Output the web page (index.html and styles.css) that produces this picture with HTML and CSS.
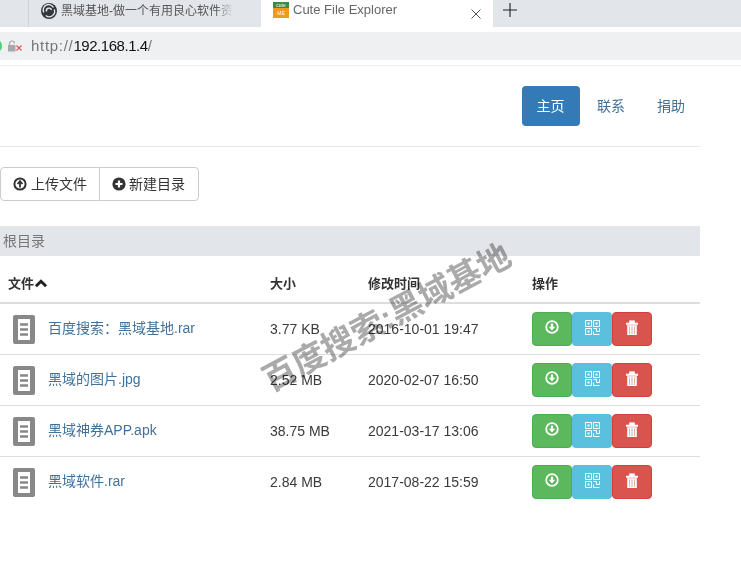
FILE: index.html
```html
<!DOCTYPE html>
<html lang="zh-CN">
<head>
<meta charset="utf-8">
<title>Cute File Explorer</title>
<link rel="stylesheet" href="styles.css">
</head>
<body>
<svg class="defs" aria-hidden="true">
  <symbol id="i-doc" viewBox="0 0 22 29"><rect width="22" height="29" rx="2" fill="#888"/><rect x="5" y="4" width="12" height="21" fill="#fff"/><path d="M7 9.500h8M7 14.500h8M7 19.500h8" stroke="#888" stroke-width="2.400"/></symbol>
  <symbol id="i-dl" viewBox="0 0 14 14"><circle cx="7" cy="7" r="5.800" fill="none" stroke="#fff" stroke-width="1.800"/><path d="M7 3.500V9" stroke="#fff" stroke-width="2.200"/><path d="M3.800 6.800h6.400L7 10.500z" fill="#fff"/></symbol>
  <symbol id="i-qr" viewBox="0 0 15 15"><path d="M.5.500h6v6h-6zM.5 8.500h6v6h-6zM8.500.500h6v6h-6zM8.500 8.500h3v3M14.500 8v3.500M11.500 11.500h3M8.500 14.500h6M8.500 11.500v3" fill="none" stroke="#fff" stroke-width="1"/><path d="M2.500 2.500h2v2h-2zM2.500 10.500h2v2h-2zM10.500 2.500h2v2h-2z" fill="#fff"/></symbol>
  <symbol id="i-del" viewBox="0 0 12 15"><path d="M0 3h12v1.500H0zM3.500 3V.7h5V3" fill="#fff" stroke="#fff" stroke-width=".6"/><path d="M1.200 5.200h9.600V15H1.200z" fill="#fff"/><path d="M3.500 6.500V14" stroke="#e7b9a8" stroke-width="1"/><path d="M6 6.500V14" stroke="#c9a9c4" stroke-width="1"/><path d="M8.500 6.500V14" stroke="#e0b88c" stroke-width="1"/></symbol>
</svg>
<div class="tabstrip">
  <div class="tab tab-inactive">
    <svg class="fav" viewBox="0 0 16 16"><circle cx="8" cy="8" r="8" fill="#33383d"/><path d="M2.800 9.500A5.400 5.400 0 0 1 12.500 4.500M13.300 6.500A5.400 5.400 0 0 1 4.800 12.500M5.500 8.500A2.600 2.600 0 0 1 10.500 7" fill="none" stroke="#e3e6e9" stroke-width="1.400"/></svg>
    <span class="tab-title">黑域基地-做一个有用良心软件资</span>
  </div>
  <div class="tab tab-active">
    <span class="cute"><span class="cute-top">cute</span><span class="cute-bot">ME</span></span>
    <span class="active-title">Cute File Explorer</span>
    <svg class="close" viewBox="0 0 10 10"><path d="M.5.500l9 9M9.500.500l-9 9" stroke="#444" stroke-width=".9" fill="none"/></svg>
  </div>
  <svg class="plus" viewBox="0 0 14 14"><path d="M7 0v14M0 7h14" stroke="#222" stroke-width="1.100" fill="none"/></svg>
</div>
<div class="addressbar">
  <span class="dot"></span>
  <svg class="lock" viewBox="0 0 15 12"><path d="M2.500 5V3.500a2.500 2.500 0 0 1 5 0" fill="none" stroke="#aaa" stroke-width="1.200"/><rect x="1" y="5" width="7.500" height="6.500" fill="#a8a8a8"/><path d="M9.500 5.500l5 5M14.500 5.500l-5 5" stroke="#d9534f" stroke-width="1.100"/></svg>
  <span class="url"><span class="scheme">http://</span><span class="host">192.168.1.4</span>/</span>
</div>
<div class="page">
  <div class="container">
    <nav class="header">
      <a class="pill pill-active" href="#">主页</a>
      <a class="pill" href="#">联系</a>
      <a class="pill" href="#">捐助</a>
    </nav>
    <div class="toolbar">
      <button class="tool tool-first">
        <svg class="ico" viewBox="0 0 14 14"><circle cx="7" cy="7" r="5.600" fill="none" stroke="#333" stroke-width="2"/><path d="M7 10.500V5M4.500 7L7 4.200 9.500 7" fill="none" stroke="#333" stroke-width="1.800"/></svg>上传文件
      </button>
      <button class="tool tool-last">
        <svg class="ico" viewBox="0 0 14 14"><circle cx="7" cy="7" r="6.600" fill="#333"/><path d="M7 3.500v7M3.500 7h7" stroke="#fff" stroke-width="2.200"/></svg>新建目录
      </button>
    </div>
    <div class="crumb">根目录</div>
    <table class="files">
      <colgroup><col class="c-name"><col class="c-size"><col class="c-time"><col class="c-ops"></colgroup>
      <thead>
        <tr><th>文件<svg class="caret" viewBox="0 0 12 8"><path d="M1.500 6.500L6 2l4.500 4.500" fill="none" stroke="#222" stroke-width="2.600"/></svg></th><th>大小</th><th>修改时间</th><th>操作</th></tr>
      </thead>
      <tbody>
        <tr>
          <td><div class="name"><svg class="doc"><use href="#i-doc"/></svg><a href="#">百度搜索：黑域基地.rar</a></div></td>
          <td>3.77 KB</td><td>2016-10-01 19:47</td>
          <td><div class="ops"><button class="op op-dl"><svg class="opi-dl"><use href="#i-dl"/></svg></button><button class="op op-qr"><svg class="opi-qr"><use href="#i-qr"/></svg></button><button class="op op-del"><svg class="opi-del"><use href="#i-del"/></svg></button></div></td>
        </tr>
        <tr>
          <td><div class="name"><svg class="doc"><use href="#i-doc"/></svg><a href="#">黑域的图片.jpg</a></div></td>
          <td>2.52 MB</td><td>2020-02-07 16:50</td>
          <td><div class="ops"><button class="op op-dl"><svg class="opi-dl"><use href="#i-dl"/></svg></button><button class="op op-qr"><svg class="opi-qr"><use href="#i-qr"/></svg></button><button class="op op-del"><svg class="opi-del"><use href="#i-del"/></svg></button></div></td>
        </tr>
        <tr>
          <td><div class="name"><svg class="doc"><use href="#i-doc"/></svg><a href="#">黑域神券APP.apk</a></div></td>
          <td>38.75 MB</td><td>2021-03-17 13:06</td>
          <td><div class="ops"><button class="op op-dl"><svg class="opi-dl"><use href="#i-dl"/></svg></button><button class="op op-qr"><svg class="opi-qr"><use href="#i-qr"/></svg></button><button class="op op-del"><svg class="opi-del"><use href="#i-del"/></svg></button></div></td>
        </tr>
        <tr>
          <td><div class="name"><svg class="doc"><use href="#i-doc"/></svg><a href="#">黑域软件.rar</a></div></td>
          <td>2.84 MB</td><td>2017-08-22 15:59</td>
          <td><div class="ops"><button class="op op-dl"><svg class="opi-dl"><use href="#i-dl"/></svg></button><button class="op op-qr"><svg class="opi-qr"><use href="#i-qr"/></svg></button><button class="op op-del"><svg class="opi-del"><use href="#i-del"/></svg></button></div></td>
        </tr>
      </tbody>
    </table>
  </div>
  <div class="watermark">百度搜索:黑域基地</div>
</div>
</body>
</html>
```
FILE: styles.css
```css
* { box-sizing: border-box; }
html, body { margin: 0; padding: 0; }
body {
  width: 741px;
  height: 566px;
  overflow: hidden;
  background: #fff;
  color: #3a3a3a;
  font: 14px/20px "Liberation Sans", "Noto Sans CJK SC", sans-serif;
}
.defs { display: none; }
.tabstrip {
  display: flex;
  align-items: stretch;
  height: 27px;
  background: #e2e5e9;
}
.tab { display: flex; align-items: center; height: 27px; }
.tab-inactive {
  width: 233px;
  margin-left: 28px;
  padding-left: 12px;
  border-left: 1px solid #d0d3d7;
  padding-bottom: 5px;
  color: #555;
  font-size: 12px;
}
.fav { width: 16px; height: 16px; flex: none; margin-right: 4px; }
.tab-title {
  width: 172px;
  white-space: nowrap;
  -webkit-mask-image: linear-gradient(to right, #000 90%, transparent);
  mask-image: linear-gradient(to right, #000 90%, transparent);
}
.tab-active {
  width: 232px;
  padding-left: 12px;
  padding-bottom: 7px;
  background: #fff;
  color: #666;
  font-size: 13px;
}
.cute {
  display: flex;
  flex-direction: column;
  width: 16px;
  height: 16px;
  margin-right: 4px;
  font-size: 5px;
  line-height: 7px;
  text-align: center;
  color: #fff;
}
.cute-top { height: 6px; background: #3d8b40; }
.cute-bot { height: 10px; line-height: 10px; background: #ef9a1c; }
.active-title { flex: 1; }
.close { width: 10px; height: 10px; margin: 7px 12px 0 0; flex: none; }
.plus { width: 14px; height: 14px; margin: 3px 0 0 10px; flex: none; }
.addressbar {
  display: flex;
  align-items: center;
  height: 28px;
  margin-top: 5px;
  background: #eff0f2;
}
.dot {
  width: 6px;
  height: 10px;
  margin-left: -4px;
  border-radius: 50%;
  background: #4fd17c;
}
.lock { width: 15px; height: 12px; margin-left: 5px; }
.url { margin-left: 9px; color: #777; font-size: 15px; }
.scheme { letter-spacing: .7px; }
.host { color: #111; letter-spacing: -.45px; }
.page {
  position: relative;
  height: 501px;
  margin-top: 5px;
  border-top: 1px solid #eceef0;
}
.container { width: 700px; }
.header {
  display: flex;
  justify-content: flex-end;
  height: 81px;
  padding: 20px 0 0;
  border-bottom: 1px solid #e7e7e7;
}
.pill {
  width: 60px;
  height: 40px;
  padding-left: 2px;
  line-height: 40px;
  text-align: center;
  color: #40719b;
  text-decoration: none;
  border-radius: 4px;
}
.pill-active { width: 58px; padding: 0 1px 0 0; background: #337ab7; color: #fff; }
.toolbar { display: flex; margin-top: 20px; }
.tool {
  display: flex;
  align-items: center;
  height: 34px;
  padding: 0 12px;
  border: 1px solid #ccc;
  background: #fff;
  color: #333;
  font: inherit;
}
.tool-first { width: 100px; border-radius: 4px 0 0 4px; }
.tool-last { width: 100px; margin-left: -1px; border-radius: 0 4px 4px 0; }
.tool-last .ico { margin-right: 3px; }
.ico { width: 14px; height: 14px; margin-right: 4px; flex: none; }
.crumb {
  height: 30px;
  margin-top: 25px;
  padding: 5px 3px;
  background: #e2e5e9;
  color: #777;
}
.files {
  width: 700px;
  margin-top: 10px;
  border-collapse: collapse;
  table-layout: fixed;
}
.c-name { width: 262px; }
.c-size { width: 98px; }
.c-time { width: 164px; }
.c-ops { width: 176px; }
.files th {
  height: 37px;
  padding: 7px 8px 8px;
  border-bottom: 2px solid #ddd;
  text-align: left;
  font-size: 13px;
  color: #333;
}
.caret { width: 14px; height: 9px; margin-left: 0; }
.files td {
  height: 51px;
  padding: 8px;
  border-top: 1px solid #ddd;
  vertical-align: middle;
}
.files tbody tr:first-child td { border-top: 0; height: 50px; }
.name { display: flex; align-items: center; padding-left: 5px; }
.doc { width: 22px; height: 29px; margin-right: 13px; flex: none; }
.name a { margin-top: -2px; color: #40719b; text-decoration: none; }
.ops { display: flex; }
.op {
  display: flex;
  align-items: center;
  justify-content: center;
  width: 40px;
  height: 34px;
  padding: 0 0 4px;
  border: 0;
  border-radius: 4px;
}
.opi-dl { width: 14px; height: 14px; }
.opi-qr { width: 15px; height: 15px; }
.opi-del { width: 12px; height: 15px; }
.op-dl { background: #5cb85c; border: 1px solid #4cae4c; }
.op-qr { background: #5bc0de; }
.op-del { background: #d9534f; border: 1px solid #d43f3a; }
.watermark {
  position: absolute;
  left: 387px;
  top: 252px;
  transform: translate(-50%, -50%) rotate(-28deg);
  white-space: nowrap;
  font-size: 33px;
  line-height: 38px;
  font-weight: 700;
  color: #aaa;
  mix-blend-mode: multiply;
}
```
